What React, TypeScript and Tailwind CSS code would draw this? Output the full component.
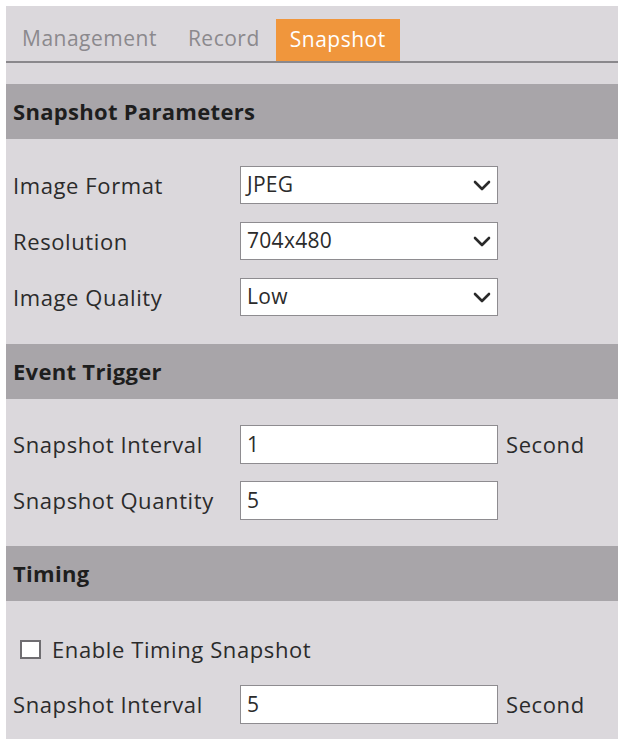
import React from "react";

const font = { fontFamily: '"Open Sans", "Noto Sans", sans-serif' };

function Chevron() {
  return (
    <svg width="18" height="11" viewBox="0 0 18 11" className="shrink-0">
      <path d="M2 2 L9 9 L16 2" fill="none" stroke="#2a2a2a" strokeWidth="2.6" strokeLinecap="round" strokeLinejoin="round" />
    </svg>
  );
}

function SelectBox({ value }: { value: string }) {
  return (
    <div className="w-[258px] h-[38px] bg-white border border-[#8e8c90] flex items-center justify-between pl-[6px] pr-[6px] text-[21px] tracking-[0.3px] text-[#2b2b2b]">
      <span>{value}</span>
      <Chevron />
    </div>
  );
}

function InputBox({ value }: { value: string }) {
  return (
    <div className="w-[258px] h-[39px] bg-white border border-[#8e8c90] flex items-center pl-[6px] text-[21px] text-[#2b2b2b]">
      {value}
    </div>
  );
}

function Row({ label, children, suffix }: { label: string; children: React.ReactNode; suffix?: string }) {
  return (
    <div className="flex items-center">
      <div className="w-[234px] pl-[7px] text-[22px] tracking-[0.6px] text-[#2b2b2b] whitespace-nowrap">{label}</div>
      {children}
      {suffix && <div className="ml-[8px] text-[22px] tracking-[0.6px] text-[#2b2b2b]">{suffix}</div>}
    </div>
  );
}

function Header({ title }: { title: string }) {
  return (
    <div className="h-[55px] bg-[#a8a5a9] flex items-center pl-[7px] text-[22px] tracking-[0.3px] font-bold text-[#1e1e1e]">
      {title}
    </div>
  );
}

export default function App() {
  return (
    <div className="w-[621px] h-[739px] bg-white pt-[6px] pl-[6px] pr-[3px] overflow-hidden" style={font}>
      <div className="h-full bg-[#dbd8dc] flex flex-col">
        <div className="h-[57px] flex items-end border-b-2 border-[#8a888c] pl-[16px]">
          <div className="text-[21px] tracking-[0.5px] text-[#8b898d] pb-[7px] mr-[31px]">Management</div>
          <div className="text-[21px] tracking-[0.5px] text-[#8b898d] pb-[7px] mr-[16px]">Record</div>
          <div className="h-[42px] px-[14px] bg-[#f0963c] text-white text-[21px] tracking-[0.5px] flex items-center pb-[1px]">Snapshot</div>
        </div>
        <div className="h-[21px]" />
        <Header title="Snapshot Parameters" />
        <div className="flex flex-col gap-[18px] pt-[27px] pb-[28px]">
          <Row label="Image Format"><SelectBox value="JPEG" /></Row>
          <Row label="Resolution"><SelectBox value="704x480" /></Row>
          <Row label="Image Quality"><SelectBox value="Low" /></Row>
        </div>
        <Header title="Event Trigger" />
        <div className="flex flex-col gap-[17px] pt-[26px] pb-[26px]">
          <Row label="Snapshot Interval" suffix="Second"><InputBox value="1" /></Row>
          <Row label="Snapshot Quantity"><InputBox value="5" /></Row>
        </div>
        <Header title="Timing" />
        <div className="flex flex-col pt-[35px]">
          <div className="flex items-center pl-[14px] h-[26px]">
            <div className="w-[21px] h-[19px] bg-white border-2 border-[#6f6d71]" />
            <span className="ml-[11px] text-[22px] tracking-[0.6px] text-[#2b2b2b]">Enable Timing Snapshot</span>
          </div>
          <div className="mt-[23px]">
            <Row label="Snapshot Interval" suffix="Second"><InputBox value="5" /></Row>
          </div>
        </div>
      </div>
    </div>
  );
}
